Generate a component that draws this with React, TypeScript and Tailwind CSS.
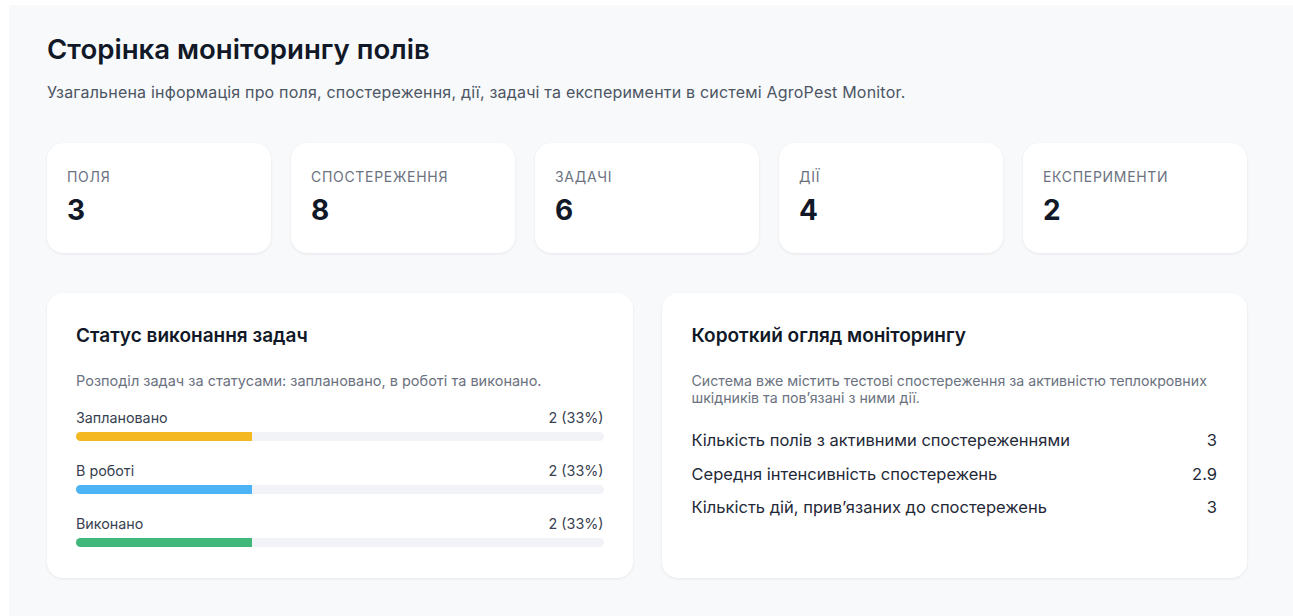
import React from "react";

const stats = [
  { label: "Поля", value: 3 },
  { label: "Спостереження", value: 8 },
  { label: "Задачі", value: 6 },
  { label: "Дії", value: 4 },
  { label: "Експерименти", value: 2 },
];

const statuses = [
  { label: "Заплановано", count: 2, bar: "bg-[#f4b823]" },
  { label: "В роботі", count: 2, bar: "bg-[#4cb3f5]" },
  { label: "Виконано", count: 2, bar: "bg-[#42b77a]" },
];

const overview = [
  { label: "Кількість полів з активними спостереженнями", value: "3" },
  { label: "Середня інтенсивність спостережень", value: "2.9" },
  { label: "Кількість дій, прив’язаних до спостережень", value: "3" },
];

const total = statuses.reduce((s, x) => s + x.count, 0);

const App = () => {
  return (
    <div className="min-h-screen bg-white pl-[9px] pt-[5px] font-['Inter',sans-serif] text-[#111827]">
      <div className="min-h-[611px] bg-[#f8f9fb] pl-[38px] pt-[26px]">
        <div className="w-[1200px]">
          <h1 className="text-[27.6px] leading-[36px] font-semibold">Сторінка моніторингу полів</h1>
          <p className="mt-[14px] text-[16px] leading-[22px] tracking-[0.2px] text-[#4b5563]">
            Узагальнена інформація про поля, спостереження, дії, задачі та експерименти в системі AgroPest Monitor.
          </p>

          <div className="mt-10 grid grid-cols-5 gap-5">
            {stats.map((s) => (
              <div key={s.label} className="h-[110px] rounded-2xl bg-white px-5 pt-[24px] shadow-[0_1px_3px_rgba(15,23,42,0.08)]">
                <div className="text-[14px] leading-[20px] uppercase tracking-[0.7px] text-[#6b7280]">{s.label}</div>
                <div className="mt-[7px] text-[28px] leading-[32px] font-bold">{s.value}</div>
              </div>
            ))}
          </div>

          <div className="mt-10 grid grid-cols-2 gap-[29px]">
            <div className="h-[285px] rounded-2xl bg-white px-[29px] pt-[31px] shadow-[0_1px_3px_rgba(15,23,42,0.08)]">
              <h2 className="text-[19px] leading-[24px] font-semibold">Статус виконання задач</h2>
              <p className="mt-[24px] text-[14.5px] leading-[18px] text-[#6b7280]">
                Розподіл задач за статусами: заплановано, в роботі та виконано.
              </p>
              <div className="mt-[18px] flex flex-col gap-5">
                {statuses.map((s) => {
                  const pct = Math.round((s.count / total) * 100);
                  return (
                    <div key={s.label}>
                      <div className="flex justify-between text-[14.3px] leading-[20px] text-[#374151]">
                        <span>{s.label}</span>
                        <span>
                          {s.count} ({pct}%)
                        </span>
                      </div>
                      <div className="mt-1 h-[9px] overflow-hidden rounded-full bg-[#f1f3f6]">
                        <div className={`h-full ${s.bar}`} style={{ width: `${(s.count / total) * 100}%` }} />
                      </div>
                    </div>
                  );
                })}
              </div>
            </div>

            <div className="h-[285px] rounded-2xl bg-white px-[30px] pt-[31px] shadow-[0_1px_3px_rgba(15,23,42,0.08)]">
              <h2 className="text-[19px] leading-[24px] font-semibold">Короткий огляд моніторингу</h2>
              <p className="mt-[24px] text-[14.2px] leading-[17px] text-[#6b7280]">
                Система вже містить тестові спостереження за активністю теплокровних шкідників та пов’язані з ними дії.
              </p>
              <div className="mt-[23px] flex flex-col gap-[11.5px]">
                {overview.map((o) => (
                  <div key={o.label} className="flex justify-between text-[16.5px] leading-[22px] text-[#1f2937]">
                    <span>{o.label}</span>
                    <span>{o.value}</span>
                  </div>
                ))}
              </div>
            </div>
          </div>
        </div>
      </div>
    </div>
  );
};

export default App;
